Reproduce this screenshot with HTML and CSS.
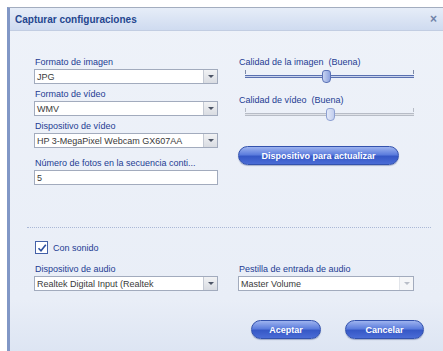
FILE: index.html
```html
<!DOCTYPE html>
<html lang="es">
<head>
    <meta charset="UTF-8">
    <title>Capturar configuraciones</title>
    <link rel="stylesheet" href="styles.css">
</head>
<body>
    <div class="window">
        <div class="titlebar">
            <span class="title">Capturar configuraciones</span>
            <span class="close">&times;</span>
        </div>

        <div class="content">
            <div class="top">
                <div class="col">
                    <div class="field">
                        <label>Formato de imagen</label>
                        <div class="select"><span>JPG</span><i class="arrow"></i></div>
                    </div>
                    <div class="field">
                        <label>Formato de vídeo</label>
                        <div class="select"><span>WMV</span><i class="arrow"></i></div>
                    </div>
                    <div class="field">
                        <label>Dispositivo de vídeo</label>
                        <div class="select"><span>HP 3-MegaPixel Webcam GX607AA</span><i class="arrow"></i></div>
                    </div>
                    <div class="field field-gap">
                        <label>Número de fotos en la secuencia conti...</label>
                        <div class="input">5</div>
                    </div>
                </div>

                <div class="col col-right">
                    <div class="field">
                        <label>Calidad de la imagen&nbsp; (Buena)</label>
                        <div class="slider">
                            <div class="track"></div>
                            <div class="thumb" style="left: 48%;"></div>
                        </div>
                    </div>
                    <div class="field">
                        <label>Calidad de vídeo&nbsp; (Buena)</label>
                        <div class="slider disabled">
                            <div class="track"></div>
                            <div class="thumb" style="left: 50%;"></div>
                        </div>
                    </div>
                    <button class="btn btn-wide">Dispositivo para actualizar</button>
                </div>
            </div>

            <div class="sep"></div>

            <div class="check-row">
                <span class="checkbox">
                    <svg width="10" height="10" viewBox="0 0 10 10"><path d="M1.5 5.2 L4 7.8 L8.8 1.8" fill="none" stroke="#2d4f9e" stroke-width="1.6"/></svg>
                </span>
                <span class="check-label">Con sonido</span>
            </div>

            <div class="bottom">
                <div class="col">
                    <div class="field">
                        <label>Dispositivo de audio</label>
                        <div class="select"><span>Realtek Digital Input (Realtek</span><i class="arrow"></i></div>
                    </div>
                </div>
                <div class="col col-right">
                    <div class="field">
                        <label>Pestilla de entrada de audio</label>
                        <div class="select select-wide"><span>Master Volume</span><i class="arrow off"></i></div>
                    </div>
                </div>
            </div>

            <div class="actions">
                <button class="btn">Aceptar</button>
                <button class="btn">Cancelar</button>
            </div>
        </div>
    </div>
</body>
</html>
```

FILE: styles.css
```css
body, html {
    margin: 0;
    padding: 0;
    background-color: #ffffff;
    overflow: hidden;
    font-family: "Liberation Sans", Arial, sans-serif;
    font-size: 9px;
}

.window {
    margin: 7px 0 0 7px;
    width: 440px;
    height: 344px;
    border-top: 1px solid #a3adbf;
    border-left: 3px solid #8197c6;
    background: linear-gradient(#eef2f9, #e9eef7 85%, #dde5f3);
    box-sizing: border-box;
}

.titlebar {
    height: 22px;
    display: flex;
    align-items: center;
    justify-content: space-between;
    padding: 0 10px 0 5px;
    background: linear-gradient(#e6edf8, #cfdbf0);
    border-bottom: 1px solid #c2cde2;
}

.title {
    color: #24468f;
    font-weight: bold;
    font-size: 10px;
}

.close {
    color: #6f82a8;
    font-size: 12px;
    font-weight: bold;
}

.content {
    padding: 26px 0 0 24px;
}

.top, .bottom {
    display: flex;
    gap: 20px;
}

.col {
    width: 184px;
}

.col-right {
    width: 177px;
}

.field {
    margin-bottom: 5px;
}

.field-gap {
    margin-top: 10px;
}

.field label {
    display: block;
    height: 11px;
    line-height: 11px;
    margin-bottom: 1px;
    padding-left: 1px;
    color: #1d3c93;
}

.select, .input {
    height: 15px;
    box-sizing: border-box;
    border: 1px solid #a2abbd;
    background-color: #ffffff;
    color: #3a3a3a;
    display: flex;
    align-items: center;
    padding-left: 2px;
}

.select span {
    flex: 1;
}

.select-wide {
    width: 176px;
}

.arrow {
    width: 13px;
    height: 13px;
    background: linear-gradient(#f1f2f4, #d9dce2);
    border-left: 1px solid #c4c9d3;
    position: relative;
}

.arrow::after {
    content: "";
    position: absolute;
    left: 4px;
    top: 5px;
    border-left: 3px solid transparent;
    border-right: 3px solid transparent;
    border-top: 3px solid #4d5566;
}

.arrow.off {
    background: #f5f6f8;
    border-left-color: #e2e5ea;
}

.arrow.off::after {
    border-top-color: #b9bec8;
}

.slider {
    position: relative;
    height: 14px;
    margin: 0 1px 12px 7px;
}

.track {
    position: absolute;
    left: 0;
    right: 0;
    top: 6px;
    height: 1px;
    border-top: 1px solid #5a70b0;
    border-bottom: 1px solid #5a70b0;
    background-color: #c8d3ec;
}

.track::before, .track::after {
    content: "";
    position: absolute;
    top: -6px;
    width: 1px;
    height: 4px;
    background-color: #7d8aa8;
}

.track::before {
    left: 0;
}

.track::after {
    right: 0;
}

.slider.disabled .track {
    border-color: #b7bcc6;
    background-color: #dfe2e8;
}

.slider.disabled .track::before, .slider.disabled .track::after {
    background-color: #b7bcc6;
}

.thumb {
    position: absolute;
    top: 1px;
    width: 7px;
    height: 11px;
    margin-left: -4px;
    border: 1px solid #5b72b6;
    border-radius: 3px 3px 4px 4px;
    background: linear-gradient(90deg, #c7d3f1, #8ea3df);
}

.slider.disabled .thumb {
    border-color: #8da0d2;
    background: linear-gradient(90deg, #e3e9f8, #c1cdee);
}

.btn {
    height: 19px;
    padding: 0 13px;
    border: 1px solid #3352ad;
    border-radius: 10px;
    background: linear-gradient(#9db3ef, #5c7ddd 45%, #3658c6 55%, #4a6cd6);
    color: #ffffff;
    font-family: "Liberation Sans", Arial, sans-serif;
    font-size: 9px;
    font-weight: bold;
    box-shadow: 0 1px 1px rgba(40, 60, 120, 0.35);
}

.btn-wide {
    margin-top: 13px;
    width: 161px;
}

.sep {
    width: 404px;
    margin: 37px 0 0 -7px;
    border-top: 1px dotted #aab8d6;
}

.check-row {
    display: flex;
    align-items: center;
    gap: 5px;
    margin: 13px 0 10px 1px;
}

.checkbox {
    width: 11px;
    height: 11px;
    border: 1px solid #4461a8;
    background-color: #ffffff;
    display: flex;
    align-items: center;
    justify-content: center;
}

.check-label {
    color: #1d3c93;
}

.actions {
    display: flex;
    justify-content: flex-end;
    gap: 24px;
    width: 390px;
    margin-top: 24px;
}

.actions .btn {
    width: 70px;
}

.actions .btn:last-child {
    width: 79px;
}
```
